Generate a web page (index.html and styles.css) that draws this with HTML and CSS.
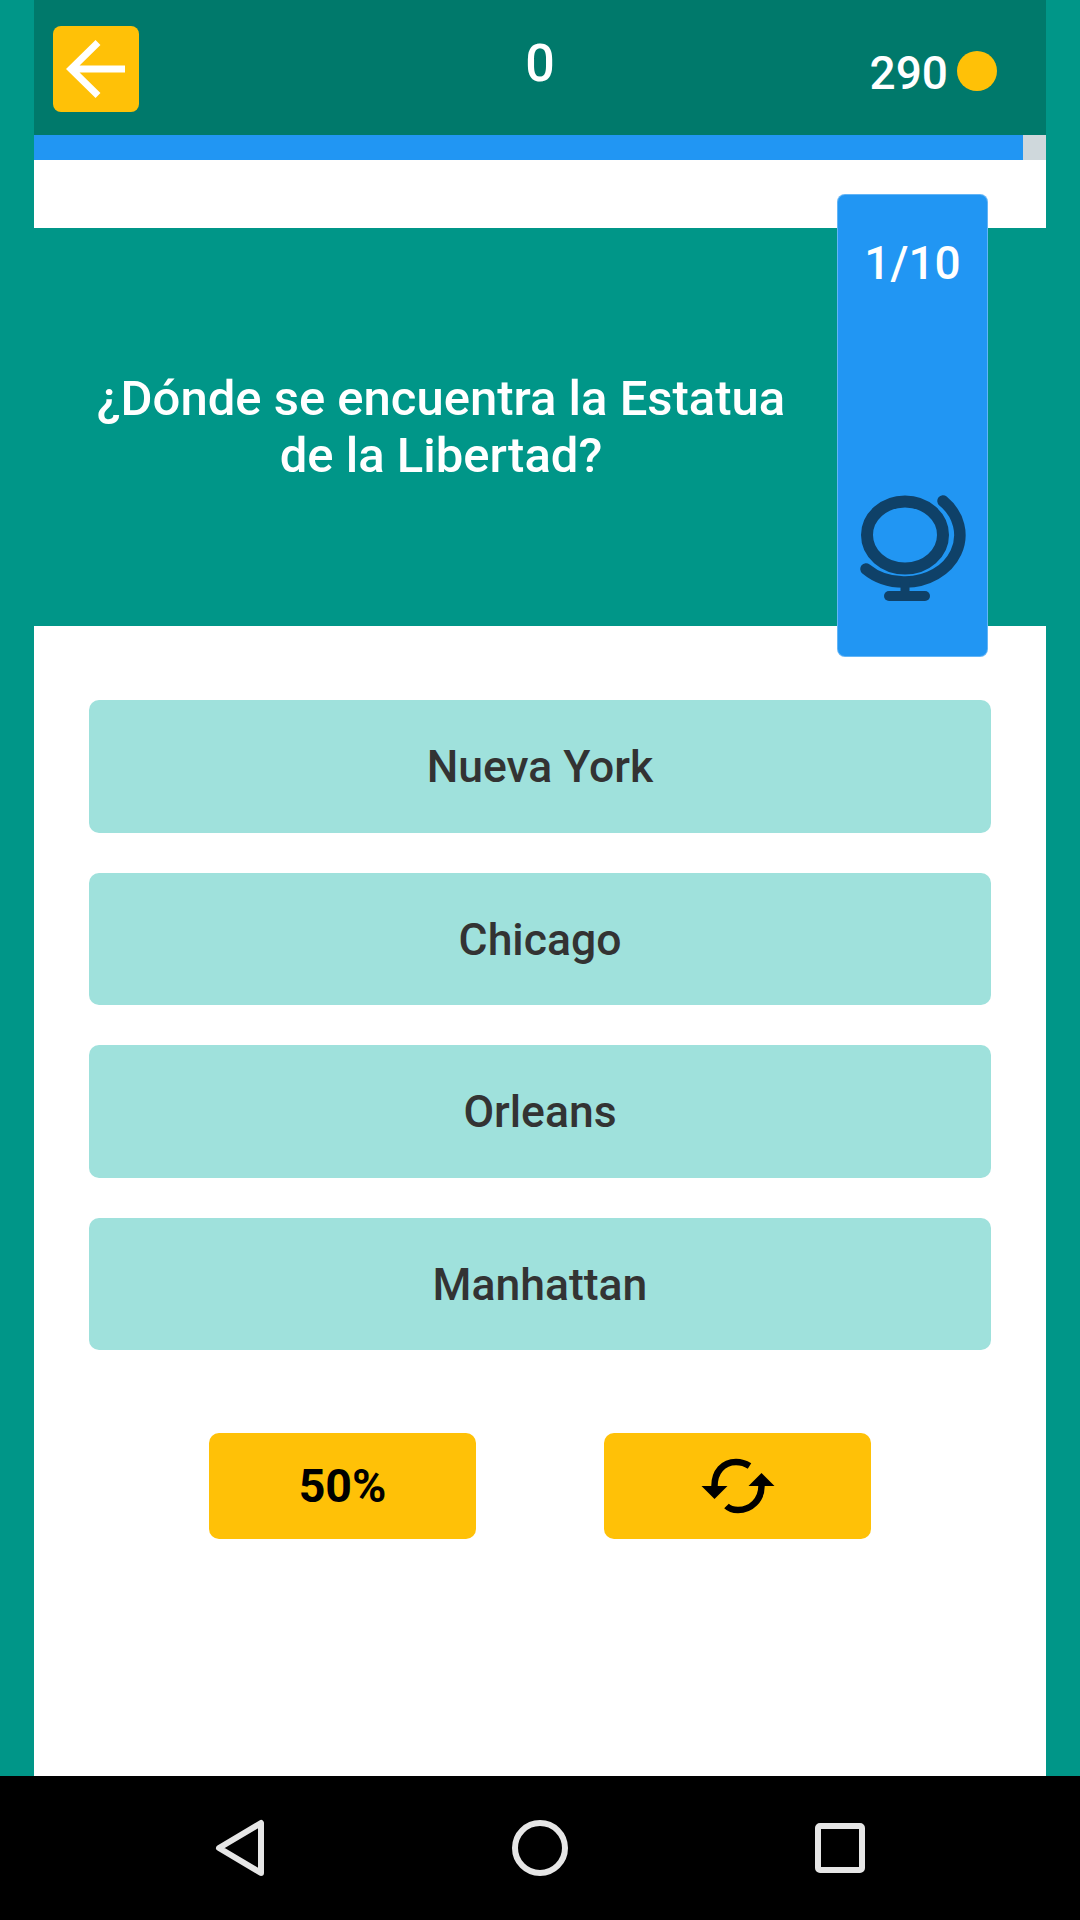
FILE: index.html
```html
<!DOCTYPE html>
<html lang="es">
<head>
  <meta charset="UTF-8">
  <meta name="viewport" content="width=device-width, initial-scale=1.0">
  <title>Quiz</title>
  <link rel="stylesheet" href="styles.css">
</head>
<body>
  <div class="screen">
    <div class="header">
      <div class="header-left">
        <button class="back-btn" aria-label="Back">
          <svg width="86" height="86" viewBox="0 0 86 86">
            <path d="M45 16.500 L18 43 L45 69.500 M18 43 H72" fill="none" stroke="#fff" stroke-width="7"/>
          </svg>
        </button>
      </div>
      <div class="score">0</div>
      <div class="coins">
        <span>290</span>
        <div class="coin"></div>
      </div>
    </div>

    <div class="progress">
      <div class="progress-fill"></div>
    </div>

    <div class="quiz-area">
      <div class="question">
        <p>¿Dónde se encuentra la Estatua de la Libertad?</p>
      </div>

      <!-- Category card sits over the question band -->
      <div class="category-card">
        <div class="counter">1/10</div>
        <svg class="globe" width="108" height="108" viewBox="0 0 108 108">
          <ellipse cx="46" cy="41" rx="38" ry="33.500" fill="none" stroke="#0f4168" stroke-width="12"/>
          <path d="M84 7 A54.500 47 0 0 1 46 88 A54.500 47 0 0 1 7 75" fill="none" stroke="#0f4168" stroke-width="11.500" stroke-linecap="round"/>
          <path d="M46 88 V102" stroke="#0f4168" stroke-width="9"/>
          <path d="M30 102 H66" stroke="#0f4168" stroke-width="10" stroke-linecap="round"/>
        </svg>
      </div>

      <div class="answers">
        <div class="answer">Nueva York</div>
        <div class="answer">Chicago</div>
        <div class="answer">Orleans</div>
        <div class="answer">Manhattan</div>
      </div>

      <div class="lifelines">
        <div class="lifeline">50%</div>
        <div class="lifeline">
          <svg width="80" height="64" viewBox="0 0 80 64">
            <path d="M51.500 12 C46 8.500 42 8 38 8 C25 8 16.500 18 16.500 32" fill="none" stroke="#000" stroke-width="6.500"/>
            <path d="M3.500 32 H29.500 L16.500 45 Z" fill="#000"/>
            <path d="M28.500 52 C32 55.500 36 56 40 56 C53 56 63.500 46 63.500 32" fill="none" stroke="#000" stroke-width="6.500"/>
            <path d="M50.500 32 H76.500 L63.500 19 Z" fill="#000"/>
          </svg>
        </div>
      </div>
    </div>
  </div>

  <div class="nav-bar">
    <svg width="60" height="60" viewBox="0 0 60 60">
      <path d="M51 5 V55 L9 30 Z" fill="none" stroke="#e6e6e6" stroke-width="6" stroke-linejoin="round"/>
    </svg>
    <svg width="60" height="60" viewBox="0 0 60 60">
      <circle cx="30" cy="30" r="25" fill="none" stroke="#e6e6e6" stroke-width="6"/>
    </svg>
    <svg width="60" height="60" viewBox="0 0 60 60">
      <rect x="8" y="8" width="44" height="44" rx="2" fill="none" stroke="#e6e6e6" stroke-width="6"/>
    </svg>
  </div>
</body>
</html>
```

FILE: styles.css
```css
* {
  box-sizing: border-box;
}

body {
  margin: 0;
  width: 1080px;
  height: 1920px;
  overflow: hidden;
  font-family: Roboto, "Liberation Sans", sans-serif;
  background-color: #000;
}

.screen {
  height: 1776px;
  padding: 0 34px;
  background-color: #009688;
  display: flex;
  flex-direction: column;
}

.header {
  height: 135px;
  background-color: #00796b;
  padding: 26px 49px 23px 49px;
  display: grid;
  grid-template-columns: 1fr auto 1fr;
  color: #fff;
  font-weight: 500;
}

.back-btn {
  display: block;
  width: 86px;
  height: 86px;
  margin-left: -30px;
  padding: 0;
  border: none;
  border-radius: 8px;
  background-color: #ffc107;
}

.back-btn svg {
  display: block;
}

.score {
  font-size: 52px;
  line-height: 76px;
}

.coins {
  display: flex;
  justify-content: flex-end;
  align-items: center;
  gap: 9px;
  font-size: 46px;
  line-height: 54px;
  height: 86px;
  padding-top: 8px;
}

.coin {
  width: 40px;
  height: 40px;
  margin-top: -4px;
  border-radius: 50%;
  background-color: #ffc107;
}

.progress {
  height: 25px;
  background-color: #cfd8dc;
}

.progress-fill {
  width: 989px;
  height: 100%;
  background-color: #2196f3;
}

.quiz-area {
  flex: 1;
  position: relative;
  background-color: #fff;
  padding-top: 68px;
}

.question {
  height: 398px;
  background-color: #009688;
  padding: 0 240px 0 42px;
  display: flex;
  align-items: center;
  justify-content: center;
}

.question p {
  margin: 0;
  text-align: center;
  color: #fff;
  font-size: 49px;
  line-height: 57px;
  font-weight: 500;
}

.category-card {
  position: absolute;
  top: 34px;
  left: 803px;
  width: 151px;
  height: 463px;
  background-color: #2196f3;
  border: 1px solid rgba(144, 202, 249, 0.6);
  border-radius: 8px;
  padding: 41px 0 54px;
  display: flex;
  flex-direction: column;
  align-items: center;
  justify-content: space-between;
}

.counter {
  color: #fff;
  font-size: 46px;
  line-height: 54px;
  font-weight: 500;
}

.answers {
  margin-top: 74px;
  padding: 0 55px;
  display: flex;
  flex-direction: column;
  gap: 40px;
}

.answer {
  height: 132.500px;
  padding-top: 2px;
  border-radius: 10px;
  background-color: #9fe1dc;
  color: #333;
  font-size: 44.500px;
  font-weight: 500;
  display: flex;
  align-items: center;
  justify-content: center;
}

.lifelines {
  margin-top: 83px;
  display: flex;
  justify-content: center;
  gap: 128px;
}

.lifeline {
  width: 267px;
  height: 106px;
  border-radius: 10px;
  background-color: #ffc107;
  color: #000;
  font-size: 46.500px;
  font-weight: 700;
  display: flex;
  align-items: center;
  justify-content: center;
}

.nav-bar {
  height: 144px;
  background-color: #000;
  padding: 0 210px;
  display: flex;
  align-items: center;
  justify-content: space-between;
}
```
